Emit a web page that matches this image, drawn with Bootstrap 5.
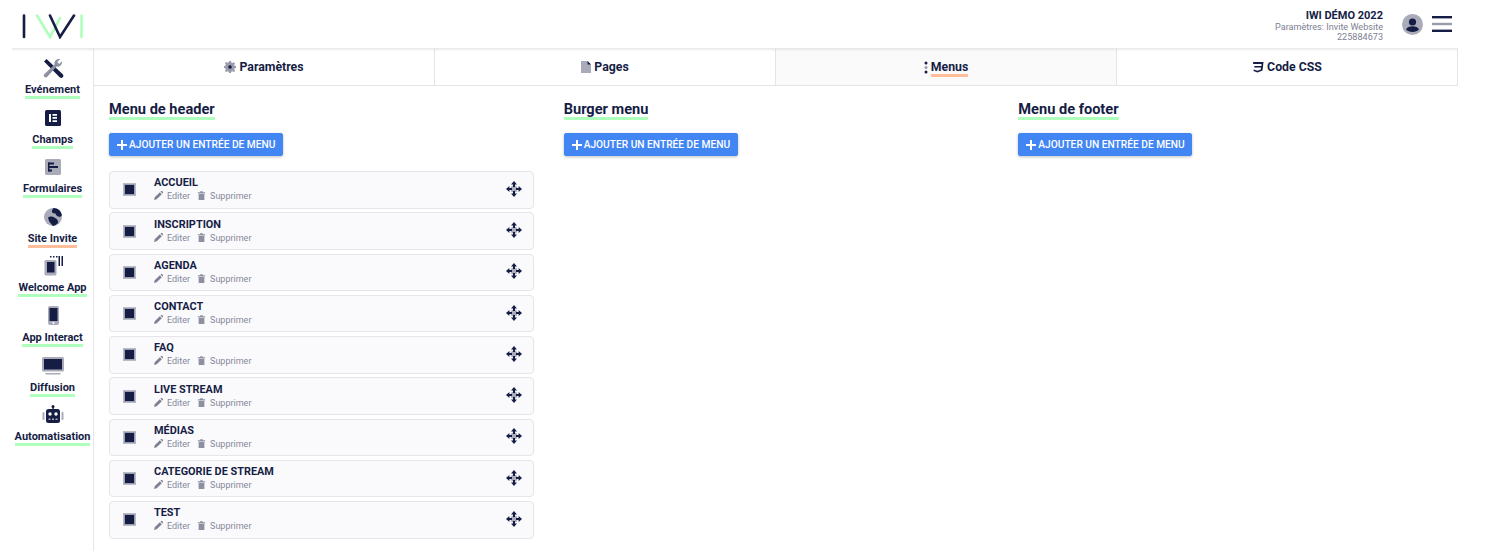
<!DOCTYPE html>
<html lang="fr">
<head>
<meta charset="utf-8">
<title>IWI</title>
<link rel="stylesheet" href="https://cdn.jsdelivr.net/npm/bootstrap@5.3.0/dist/css/bootstrap.min.css">
<style>
html,body{height:551px;overflow:hidden}
body{font-family:"Roboto","Liberation Sans",sans-serif;color:#161d45;background:#fff}
.shell{width:1458px;height:551px;padding-left:12px}
.topbar{height:49px;border-bottom:1px solid #e9e9ec;box-shadow:0 2px 2px -1px rgba(0,0,0,.08);position:relative;z-index:2;padding:0 6px 0 10px}
.logo{width:62px;height:26px;display:block;margin-top:3px}
.who{font-size:9.100px;line-height:10.500px;text-align:right;color:#7d8092;margin-right:19px;margin-top:4px}
.who b{display:block;color:#161d45;font-size:11px;font-weight:700;line-height:12px}
.avatar{width:21px;height:21px;display:block;margin-right:9px}
.burger{width:20px;height:16px;display:block}
.side{width:82px;border-right:1px solid #e6e6ea;height:502px;padding-top:8px}
.side-item{height:49.6px;display:flex;flex-direction:column;align-items:center}
.side-ico{width:22px;height:22px;display:block;margin-bottom:4px}
.side-lab{font-size:11px;font-weight:700;line-height:13px;border-bottom:3px solid #aeffbb;white-space:nowrap;color:#161d45}
.side-lab.hot{border-color:#ffbd99}
.mainp{width:1364px}
.tabbar{height:37px;border-bottom:1px solid #e4e4e8;border-right:1px solid #e4e4e8}
.tabx{flex:1 1 0;height:36px;border-right:1px solid #e4e4e8;font-size:12.300px;font-weight:700;gap:3px;color:#161d45}
.tabx:last-child{border-right:0}
.tabx.on{background:#fafafa}
.tabx svg{display:block}
.tabx .ul{border-bottom:3px solid #ffbd99;line-height:14px;margin-top:3px}
.colx{width:33.3333%;padding:15px 15px 0}
.h-title{display:inline-block;font-size:14.600px;font-weight:700;line-height:16px;border-bottom:3px solid #aeffbb;color:#161d45;margin:0 0 13px;vertical-align:top;padding:0}
.addbtn{--bs-btn-bg:#4286f4;--bs-btn-border-color:#4286f4;--bs-btn-hover-bg:#4286f4;--bs-btn-hover-border-color:#4286f4;display:flex;align-items:center;gap:2px;height:23px;width:174px;padding:0 0 0 7px;font-size:10.200px;font-weight:500;border-radius:2px;box-shadow:0 1px 3px rgba(0,0,0,.25);white-space:nowrap}
.addbtn svg{flex:none}
.stack{margin-top:15px;display:flex;flex-direction:column;gap:3.75px}
.rowx{height:37.5px;border:1px solid #e5e5ea;border-radius:4px;background:#fafafc;padding:0 11px 0 14px}
.chk{width:11px;height:11px;background:#161d45;border:1px solid #9b9eae;box-shadow:0 0 0 1px #b9bbc7;flex:none;margin-right:19px}
.rname{font-size:10.900px;font-weight:700;line-height:13px;color:#161d45;white-space:nowrap;margin-top:-1px}
.racts{font-size:9px;line-height:11px;color:#85889a;margin-top:2px;gap:7px}
.racts svg{width:9px;height:9px;margin-right:4px;vertical-align:-1px}
.mv{width:16px;height:16px;display:block;margin-top:-2px}
</style>
</head>
<body>
<div class="shell">
  <header class="topbar d-flex align-items-center justify-content-between">
    <svg class="logo" viewBox="0 0 62 26" aria-label="IWI">
      <g fill="none" stroke-width="2.600" stroke-linecap="round">
        <path d="M2 2.500V24" stroke="#161d45"/>
        <path d="M59.500 2.500V24" stroke="#aeffbb"/>
        <path d="M15 2.500L28 24L38 5" stroke="#aeffbb"/>
        <path d="M28 2.500L38 24L52 2.500" stroke="#161d45"/>
      </g>
    </svg>
    <div class="d-flex align-items-center">
      <div class="who"><b>IWI DÉMO 2022</b>Paramètres: Invite Website<br>225884673</div>
      <svg class="avatar" viewBox="0 0 21 21"><circle cx="10.500" cy="10.500" r="10.500" fill="#a9abb9"/><circle cx="10.500" cy="8" r="3.600" fill="#161d45"/><path d="M4 15.500c1-2.600 3.400-3.300 6.500-3.300s5.500.7 6.500 3.300c-1.500 1.600-3.800 2.500-6.500 2.500s-5-.9-6.500-2.500z" fill="#161d45"/></svg>
      <svg class="burger" viewBox="0 0 20 16"><rect y="0" width="20" height="2.400" fill="#161d45"/><rect y="6.800" width="20" height="2.400" fill="#9a9cac"/><rect y="13.600" width="20" height="2.400" fill="#161d45"/></svg>
    </div>
  </header>
  <div class="d-flex">
    <nav class="side flex-none">
      <a class="side-item text-decoration-none">
        <svg class="side-ico" viewBox="0 0 22 22"><path d="M2 4.500L4.500 2l16 15c1.200 1.200 1.200 2.200.2 3.300s-2.200 1-3.300-.2z" fill="#161d45"/><path d="M2 17.500L12.500 7.500c-.6-3 2-6 5.500-5.300l-2.800 2.700 2 2 2.700-2.700c.6 3.500-2.200 6-5.200 5.400L5 20c-1.800 1.300-4.200-.9-3-2.500z" fill="#8d90a1"/></svg>
        <span class="side-lab">Evénement</span>
      </a>
      <a class="side-item text-decoration-none">
        <svg class="side-ico" viewBox="0 0 22 22"><rect x="3" y="3" width="16" height="16" rx="1.500" fill="#161d45"/><path d="M7 7h2v8H7zM10.500 7H15v1.700h-4.500zM10.500 10.100H15v1.700h-4.500zM10.500 13.300H15V15h-4.500z" fill="#fff"/></svg>
        <span class="side-lab">Champs</span>
      </a>
      <a class="side-item text-decoration-none">
        <svg class="side-ico" viewBox="0 0 22 22"><rect x="3" y="3" width="16" height="16" rx="1.500" fill="#a9abb9"/><path d="M6 6.500h1.500v9H6z" fill="#161d45"/><path d="M6 6.500h6v2H6zM6 10h10v2H6zM6 13.500h4v2H6z" fill="#161d45"/></svg>
        <span class="side-lab">Formulaires</span>
      </a>
      <a class="side-item text-decoration-none">
        <svg class="side-ico" viewBox="0 0 22 22"><circle cx="11" cy="11" r="9" fill="#a9abb9"/><path d="M11.500 2c4.500 0 8 3 8.400 7.500l-2 1.500-3-1-1.500-2.500-3-.5-.5-2.500zM6 11.500c2-1.500 5-1 7 .5 2 1 3.500 2.500 3 5-1.500 1.500-3 2.500-5 3-1.500-2-3-3-4-5z" fill="#161d45"/></svg>
        <span class="side-lab hot">Site Invite</span>
      </a>
      <a class="side-item text-decoration-none">
        <svg class="side-ico" viewBox="0 0 22 22"><rect x="2.500" y="5" width="12" height="15.500" rx="1.500" fill="#a9abb9"/><rect x="5" y="7" width="7.500" height="10.500" fill="#161d45"/><path d="M8 1h1.500v1.500H8zM11 1h1.500v1.500H11zM14 1h1.500v1.500H14zM16.500 1H18v10h-1.500zM19.500 1H21v10h-1.500z" fill="#161d45"/></svg>
        <span class="side-lab">Welcome App</span>
      </a>
      <a class="side-item text-decoration-none">
        <svg class="side-ico" viewBox="0 0 22 22"><rect x="6" y="1" width="11" height="19" rx="2" fill="#a9abb9"/><rect x="7.500" y="3" width="8" height="13" fill="#161d45"/><circle cx="11.500" cy="18" r="1" fill="#fff"/></svg>
        <span class="side-lab">App Interact</span>
      </a>
      <a class="side-item text-decoration-none">
        <svg class="side-ico" viewBox="0 0 22 22"><rect x="0" y="2" width="22" height="14.500" rx="1.500" fill="#a9abb9"/><rect x="2" y="4" width="18" height="10.500" fill="#161d45"/><rect x="3.500" y="18" width="15" height="1.500" fill="#a9abb9"/></svg>
        <span class="side-lab">Diffusion</span>
      </a>
      <a class="side-item text-decoration-none">
        <svg class="side-ico" viewBox="0 0 22 22"><rect x="4" y="5" width="14" height="14" rx="2.500" fill="#161d45"/><circle cx="11" cy="2.500" r="1.500" fill="#161d45"/><rect x="10.300" y="3" width="1.400" height="3" fill="#161d45"/><rect x="0.500" y="8" width="2" height="8" rx="1" fill="#a9abb9"/><rect x="19.500" y="8" width="2" height="8" rx="1" fill="#a9abb9"/><circle cx="8" cy="10" r="1.700" fill="#fff"/><circle cx="14" cy="10" r="1.700" fill="#fff"/><path d="M6.500 14.500h2v1.500h-2zM10 14.500h2v1.500h-2zM13.500 14.500h2v1.500h-2z" fill="#a9abb9"/></svg>
        <span class="side-lab">Automatisation</span>
      </a>
    </nav>
    <main class="mainp">
      <div class="tabbar d-flex">
        <div class="tabx d-flex align-items-center justify-content-center">
          <svg width="12" height="12" viewBox="0 0 12 12"><path d="M5 0h2l.3 1.600 1.200.5L9.900 1.200l1.200 1.200-.9 1.400.5 1.200L12 5v2l-1.300.3-.5 1.200.9 1.400-1.200 1.200-1.400-.9-1.200.5L7 12H5l-.3-1.300-1.200-.5-1.400.9L.9 9.900l.9-1.400-.5-1.200L0 7V5l1.300-.3.5-1.200-.9-1.400 1.200-1.200 1.400.9 1.200-.5z" fill="#9a9cac"/><circle cx="6" cy="6" r="1.800" fill="#161d45"/></svg>
          <span>Paramètres</span>
        </div>
        <div class="tabx d-flex align-items-center justify-content-center">
          <svg width="10" height="12" viewBox="0 0 10 12"><path d="M0 0h6.500L10 3.500V12H0z" fill="#a9abb9"/><path d="M6.500 0L10 3.500H6.500z" fill="#161d45"/></svg>
          <span>Pages</span>
        </div>
        <div class="tabx on d-flex align-items-center justify-content-center">
          <svg width="4" height="13" viewBox="0 0 4 13"><circle cx="2" cy="2" r="1.500" fill="#161d45"/><circle cx="2" cy="6.500" r="1.500" fill="#9a9cac"/><circle cx="2" cy="11" r="1.500" fill="#161d45"/></svg>
          <span class="ul">Menus</span>
        </div>
        <div class="tabx d-flex align-items-center justify-content-center">
          <svg width="12" height="12" viewBox="0 0 12 12"><path d="M1 1h10.500l-1 8.500L5.500 11.500 1.500 10l.2-1.600 3.800 1.300 3.300-1.300.2-1.900H2.200L2.400 5h7L9.600 3H1.200z" fill="#161d45"/></svg>
          <span>Code CSS</span>
        </div>
      </div>
      <div class="d-flex">
        <section class="colx">
          <h2 class="h-title">Menu de header</h2>
          <button type="button" class="btn btn-primary addbtn"><svg width="10" height="10" viewBox="0 0 10 10"><path d="M4 0h2v4h4v2H6v4H4V6H0V4h4z" fill="#fff"/></svg>AJOUTER UN ENTRÉE DE MENU</button>
          <div class="stack" id="s"></div>
        </section>
        <section class="colx">
          <h2 class="h-title">Burger menu</h2>
          <button type="button" class="btn btn-primary addbtn"><svg width="10" height="10" viewBox="0 0 10 10"><path d="M4 0h2v4h4v2H6v4H4V6H0V4h4z" fill="#fff"/></svg>AJOUTER UN ENTRÉE DE MENU</button>
        </section>
        <section class="colx">
          <h2 class="h-title">Menu de footer</h2>
          <button type="button" class="btn btn-primary addbtn"><svg width="10" height="10" viewBox="0 0 10 10"><path d="M4 0h2v4h4v2H6v4H4V6H0V4h4z" fill="#fff"/></svg>AJOUTER UN ENTRÉE DE MENU</button>
        </section>
      </div>
    </main>
  </div>
</div>
<script>
var names=["ACCUEIL","INSCRIPTION","AGENDA","CONTACT","FAQ","LIVE STREAM","MÉDIAS","CATEGORIE DE STREAM","TEST"];
document.getElementById('s').innerHTML=names.map(function(n){return '<div class="rowx d-flex align-items-center"><span class="chk"></span><div class="flex-grow-1"><div class="rname">'+n+'</div><div class="racts d-flex"><span><svg viewBox="0 0 10 10"><path d="M0 10l.8-3L6.500 1.300l2.200 2.200L3 9.200zM7.200.6l.6-.6a.9.900 0 0 1 1.200 0l1 1a.9.900 0 0 1 0 1.200l-.6.600z" fill="#7d8092"/></svg>Editer</span><span><svg viewBox="0 0 10 10"><path d="M1 1.500h8v1.200H1zM3.500.3h3v1h-3zM1.800 3.200h6.400V10H1.800z" fill="#8d90a1"/></svg>Supprimer</span></div></div><svg class="mv" viewBox="0 0 16 16"><circle cx="8" cy="8" r="3.500" fill="#a9abb9"/><path d="M8 0l3 3.400H5zM8 16l-3-3.400h6zM0 8l3.400-3v6zM16 8l-3.400 3V5z" fill="#161d45"/><path d="M7 3h2v3H7zM7 10h2v3H7zM3 7h3v2H3zM10 7h3v2h-3z" fill="#161d45"/></svg></div>'}).join('');
</script>
</body>
</html>
